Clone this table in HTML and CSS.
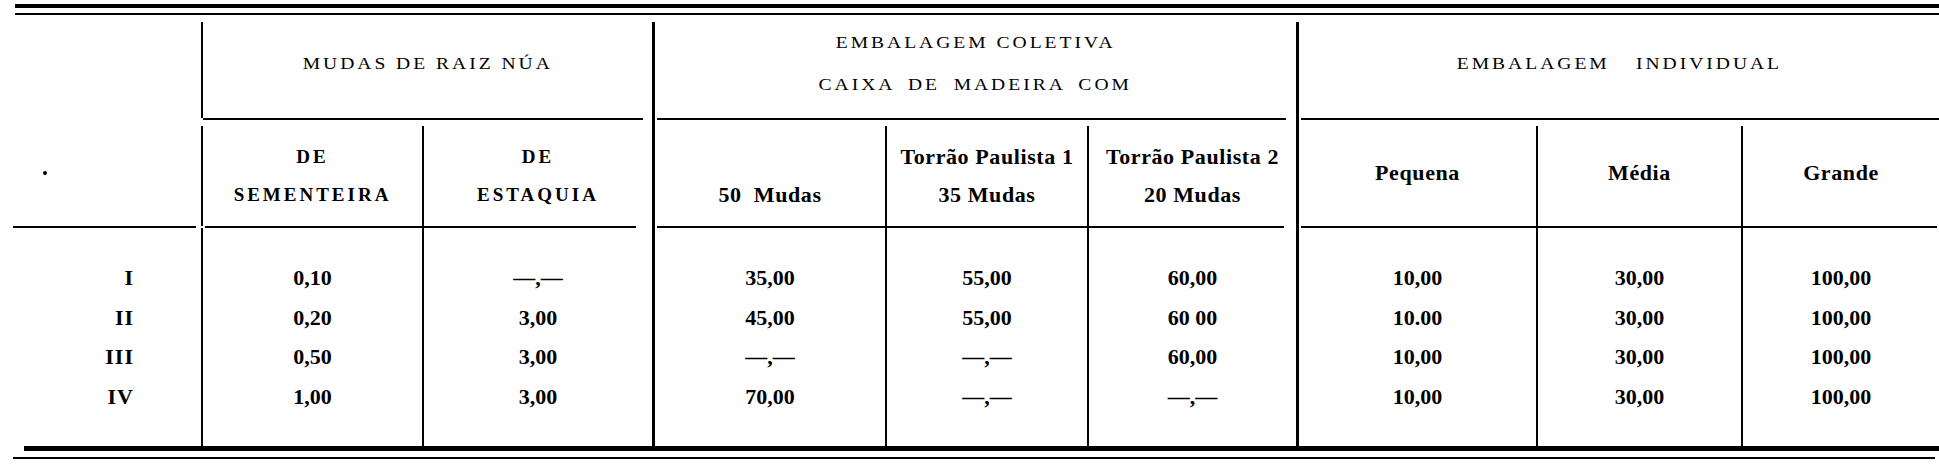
FILE: index.html
```html
<!DOCTYPE html>
<html lang="pt">
<head>
<meta charset="utf-8">
<title>Tabela de preços de mudas</title>
<link rel="stylesheet" href="styles.css">
</head>
<body>
<div class="page">
  <div class="rule-top-thick"></div>
  <div class="rule-top-thin"></div>
  <div class="table">
    <div class="group g-label">
      <div class="label-head"><span class="dot"></span></div>
      <div class="hrule r-label"></div>
      <div class="label-body">
        <div>I</div><div>II</div><div>III</div><div>IV</div>
      </div>
    </div>

    <div class="group g-mudas">
      <div class="ghead bl2"><div class="cap">MUDAS DE RAIZ NÚA</div></div>
      <div class="hrule r-mudas1"></div>
      <div class="sub-row cols-mudas">
        <div class="sub-cell bl2"><div class="sub">DE</div><div class="sub">SEMENTEIRA</div></div>
        <div class="sub-cell bl2"><div class="sub">DE</div><div class="sub">ESTAQUIA</div></div>
      </div>
      <div class="hrule r-mudas2"></div>
      <div class="body-row cols-mudas">
        <div class="col bl2"><div>0,10</div><div>0,20</div><div>0,50</div><div>1,00</div></div>
        <div class="col bl2"><div>—,—</div><div>3,00</div><div>3,00</div><div>3,00</div></div>
      </div>
    </div>

    <div class="group g-major g-coletiva">
      <div class="ghead"><div class="cap">EMBALAGEM COLETIVA</div><div class="cap cap-words">CAIXA DE MADEIRA COM</div></div>
      <div class="hrule r-col1"></div>
      <div class="sub-row cols-coletiva">
        <div class="sub-cell"><div class="sub-b">&nbsp;</div><div class="sub-b">50&nbsp; Mudas</div></div>
        <div class="sub-cell bl2"><div class="sub-b">Torrão Paulista 1</div><div class="sub-b">35 Mudas</div></div>
        <div class="sub-cell bl2"><div class="sub-b">Torrão Paulista 2</div><div class="sub-b">20 Mudas</div></div>
      </div>
      <div class="hrule r-col2"></div>
      <div class="body-row cols-coletiva">
        <div class="col"><div>35,00</div><div>45,00</div><div>—,—</div><div>70,00</div></div>
        <div class="col bl2"><div>55,00</div><div>55,00</div><div>—,—</div><div>—,—</div></div>
        <div class="col bl2"><div>60,00</div><div>60 00</div><div>60,00</div><div>—,—</div></div>
      </div>
    </div>

    <div class="group g-major g-individual">
      <div class="ghead"><div class="cap cap-ind">EMBALAGEM INDIVIDUAL</div></div>
      <div class="hrule r-ind1"></div>
      <div class="sub-row cols-individual">
        <div class="sub-cell single"><div class="sub-b">Pequena</div></div>
        <div class="sub-cell single bl2"><div class="sub-b">Média</div></div>
        <div class="sub-cell single bl2"><div class="sub-b">Grande</div></div>
      </div>
      <div class="hrule r-ind2"></div>
      <div class="body-row cols-individual">
        <div class="col"><div>10,00</div><div>10.00</div><div>10,00</div><div>10,00</div></div>
        <div class="col bl2"><div>30,00</div><div>30,00</div><div>30,00</div><div>30,00</div></div>
        <div class="col bl2"><div>100,00</div><div>100,00</div><div>100,00</div><div>100,00</div></div>
      </div>
    </div>
  </div>
  <div class="rule-bottom-thick"></div>
  <div class="rule-bottom-thin"></div>
</div>
</body>
</html>
```

FILE: styles.css
```css
* {
  box-sizing: border-box;
  margin: 0;
  padding: 0;
}

html,
body {
  background: #fff;
}

body {
  width: 1939px;
  height: 464px;
  overflow: hidden;
  font-family: "Liberation Serif", "Times New Roman", serif;
  color: #000;
}

.page {
  padding-top: 4px;
}

.rule-top-thick {
  height: 4px;
  background: #000;
  margin-left: 15px;
}

.rule-top-thin {
  height: 2px;
  background: #000;
  margin: 5px 0 0 15px;
}

.rule-bottom-thick {
  height: 5px;
  background: #000;
  margin-left: 24px;
}

.rule-bottom-thin {
  height: 2px;
  background: #000;
  margin: 6px 4px 0 13px;
}

.table {
  display: flex;
  margin-top: 7px;
  height: 424px;
}

.group {
  display: flex;
  flex-direction: column;
}

.g-label {
  width: 201px;
}

.g-mudas {
  width: 451px;
}

.g-coletiva {
  width: 644px;
}

.g-individual {
  width: 643px;
}

.g-major {
  border-left: 3px solid #000;
}

.bl2 {
  border-left: 2px solid #000;
}

/* label column */
.label-head {
  height: 204px;
  display: flex;
  align-items: flex-start;
}

.dot {
  display: block;
  width: 4px;
  height: 4px;
  border-radius: 50%;
  background: #000;
  margin: 149px 0 0 43px;
}

.label-body {
  height: 218px;
  display: flex;
  flex-direction: column;
  justify-content: center;
  align-items: flex-end;
  padding-right: 67px;
  font-weight: bold;
  font-size: 22px;
  line-height: 39.5px;
  letter-spacing: 1px;
}

/* horizontal rules */
.hrule {
  height: 2px;
  background: #000;
  flex: none;
}

.r-label {
  margin: 0 5px 0 13px;
}

.r-mudas1 {
  margin: 0 9px 0 2px;
}

.r-mudas2 {
  margin: 0 16px 0 4px;
}

.r-col1 {
  margin: 0 10px 0 2px;
}

.r-col2 {
  margin: 0 12px 0 2px;
}

.r-ind1 {
  margin: 0 0 0 2px;
}

.r-ind2 {
  margin: 0 2px 0 2px;
}

/* group headers */
.ghead {
  height: 96px;
  display: flex;
  flex-direction: column;
  justify-content: center;
  align-items: center;
  padding-bottom: 12px;
}

.cap {
  font-size: 17px;
  line-height: 42px;
  letter-spacing: 2.6px;
  white-space: nowrap;
  transform: scaleX(1.15);
}

.cap-words {
  word-spacing: 5px;
}

.cap-ind {
  word-spacing: 16px;
}

/* sub headers */
.sub-row {
  height: 106px;
  display: grid;
}

.cols-mudas {
  grid-template-columns: 221px 1fr;
}

.cols-coletiva {
  grid-template-columns: 230px 202px 1fr;
}

.cols-individual {
  grid-template-columns: 237px 205px 1fr;
}

.sub-cell {
  margin-top: 6px;
  display: flex;
  flex-direction: column;
  justify-content: center;
  align-items: center;
  white-space: nowrap;
}

.sub-cell.single {
  padding-bottom: 6px;
}

.sub {
  font-weight: bold;
  font-size: 19px;
  line-height: 38px;
  letter-spacing: 3px;
}

.sub-b {
  font-weight: bold;
  font-size: 22px;
  line-height: 38px;
  letter-spacing: 0.6px;
}

/* body */
.body-row {
  height: 218px;
  display: grid;
}

.col {
  display: flex;
  flex-direction: column;
  justify-content: center;
  align-items: center;
  font-weight: bold;
  font-size: 22px;
  line-height: 39.5px;
  white-space: nowrap;
}
```
